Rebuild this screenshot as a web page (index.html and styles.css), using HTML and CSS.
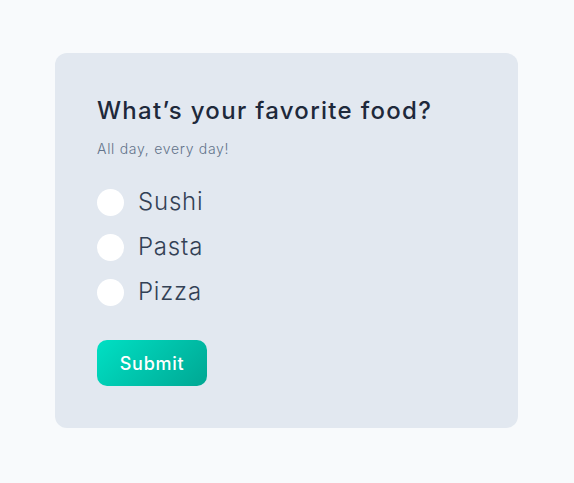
FILE: index.html
```html
<!DOCTYPE html>
<html>
<head>
<meta charset="utf-8">
<link rel="stylesheet" href="styles.css">
</head>
<body>
<div class="card">
  <h1 class="title">What’s your favorite food?</h1>
  <p class="subtitle">All day, every day!</p>
  <div class="options">
    <label class="option"><span class="radio"></span><span class="label">Sushi</span></label>
    <label class="option"><span class="radio"></span><span class="label">Pasta</span></label>
    <label class="option"><span class="radio"></span><span class="label">Pizza</span></label>
  </div>
  <button class="submit">Submit</button>
</div>
</body>
</html>
```
FILE: styles.css
```css
html, body {
  margin: 0;
  padding: 0;
  background: #f8fafc;
  font-family: "Inter", "Open Sans", sans-serif;
}
body {
  padding: 53px 0 0 55px;
}
.card {
  box-sizing: border-box;
  width: 463px;
  height: 375px;
  background: #e2e8f0;
  border-radius: 12px;
  padding: 42px 42px;
  display: flex;
  flex-direction: column;
  align-items: flex-start;
}
.title {
  margin: 0;
  font-size: 24px;
  line-height: 32px;
  font-weight: 500;
  letter-spacing: 1.3px;
  color: #1e293b;
}
.subtitle {
  margin: 12px 0 0;
  font-size: 14px;
  line-height: 20px;
  font-weight: 300;
  letter-spacing: 0.7px;
  color: #64748b;
}
.options {
  margin-top: 27px;
  display: flex;
  flex-direction: column;
  gap: 13px;
}
.option {
  display: flex;
  align-items: center;
  gap: 14px;
}
.radio {
  width: 27px;
  height: 27px;
  border-radius: 50%;
  background: #ffffff;
}
.label {
  font-size: 24px;
  line-height: 32px;
  font-weight: 300;
  letter-spacing: 0.8px;
  color: #334155;
}
.submit {
  margin-top: 32px;
  width: 110px;
  height: 47px;
  border: none;
  border-radius: 10px;
  background: linear-gradient(135deg, #00e0c4 0%, #00a793 100%);
  color: #ffffff;
  font-family: inherit;
  font-size: 18px;
  font-weight: 500;
  letter-spacing: 0.7px;
}
```
